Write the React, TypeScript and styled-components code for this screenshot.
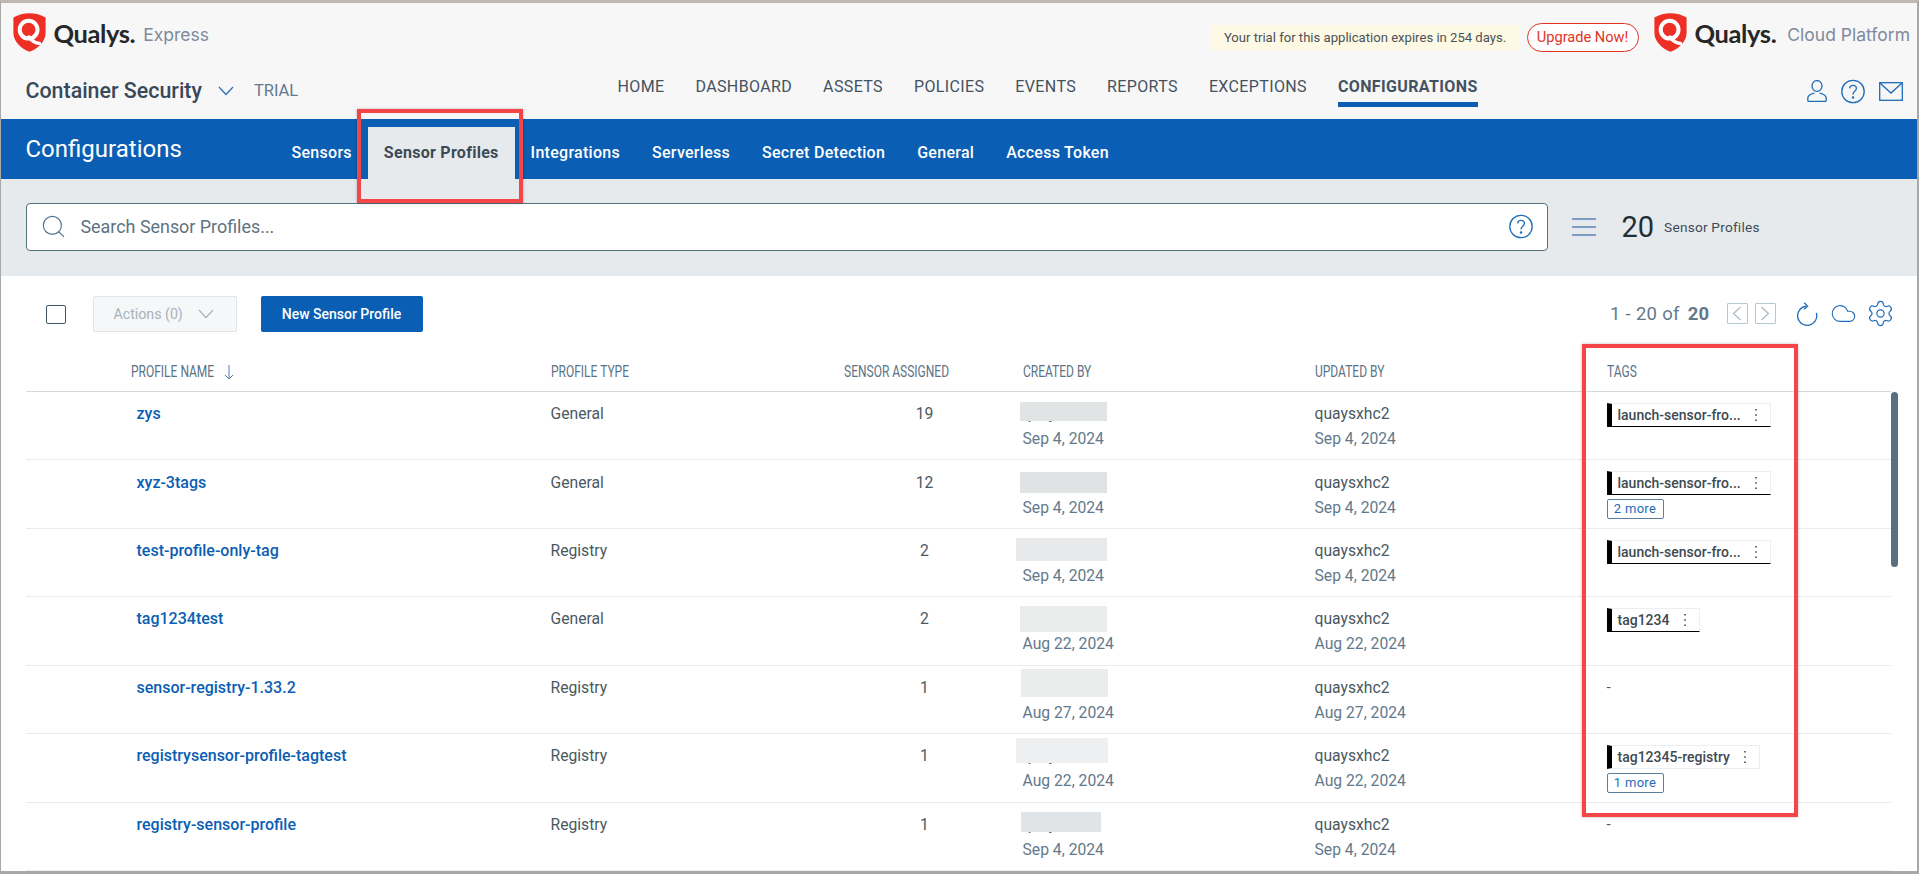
import styled, { createGlobalStyle } from "styled-components";
import { Cloud, Search, Settings } from "lucide-react";

const GlobalStyle = createGlobalStyle`
  html, body {
    margin: 0;
    padding: 0;
    background: #fff;
    overflow: hidden;
  }
  * {
    box-sizing: border-box;
  }
  body {
    font-family: Roboto, "Liberation Sans", sans-serif;
    color: #44525f;
  }
  ul {
    list-style: none;
    margin: 0;
    padding: 0;
  }
`;

const Frame = styled.div`
  position: relative;
  width: 1919px;
  height: 874px;
  overflow: hidden;
  background: #fff;
  border-style: solid;
  border-color: #a8a8a8;
  border-width: 0 2px 3px 1.5px;
  border-top: 3.5px solid #c2b6b0;
`;

/* top header */
const TopBar = styled.header`
  background: #f7f7f7;
  height: 115.5px;
`;

const BrandRow = styled.div`
  height: 59.5px;
  display: flex;
  align-items: center;
  padding: 0 7px 0 11.5px;
`;

const Brand = styled.div`
  display: flex;
  align-items: center;
`;

const LogoMark = styled.svg`
  width: 33px;
  height: 39px;
  flex: none;
`;

const BrandName = styled.span`
  font-family: Lato, "Liberation Sans", sans-serif;
  font-size: 25.5px;
  font-weight: 700;
  letter-spacing: -0.4px;
  color: #252728;
  margin-left: 8px;
`;

const BrandSuffix = styled.span<{ $gap: number }>`
  font-family: Inter, "Liberation Sans", sans-serif;
  font-size: 17.5px;
  color: #7e8a9d;
  margin-left: ${(p) => p.$gap}px;
  margin-top: 3px;
`;

const TrialArea = styled.div`
  margin-left: auto;
  display: flex;
  align-items: center;
  margin-top: 9px;
`;

const TrialNotice = styled.div`
  width: 309px;
  height: 25px;
  background: #fdf9e4;
  font-size: 13.1px;
  line-height: 25px;
  text-align: center;
  color: #4b5258;
`;

const UpgradeButton = styled.button`
  width: 112px;
  height: 29px;
  margin-left: 7px;
  border: 1px solid #e0341f;
  border-radius: 15px;
  background: #fff;
  color: #e0341f;
  font: 14.6px Roboto, sans-serif;
  padding: 0;
`;

const RightBrand = styled(Brand)`
  margin-left: 15px;
`;

const NavRow = styled.div`
  height: 56px;
  display: flex;
  align-items: flex-start;
`;

const AppSwitch = styled.div`
  width: 616.5px;
  height: 56px;
  padding-left: 24.5px;
  display: flex;
  align-items: center;
`;

const AppName = styled.span`
  font-size: 21.4px;
  font-weight: 500;
  color: #39495a;
`;

const Chevron = styled.svg`
  width: 16px;
  height: 10px;
  margin-left: 16px;
`;

const TrialTag = styled.span`
  font-size: 16.5px;
  color: #647b8d;
  margin-left: 20px;
`;

const MainNav = styled.ul`
  display: flex;
  gap: 31px;
  margin-top: 13px;
`;

const NavItem = styled.li<{ $active?: boolean }>`
  font-size: 16px;
  line-height: 22px;
  letter-spacing: 0.37px;
  height: 31px;
  padding-bottom: 4px;
  color: #44525f;
  font-weight: ${(p) => (p.$active ? 700 : 400)};
  border-bottom: 5px solid ${(p) => (p.$active ? "#0a5eb3" : "transparent")};
`;

const UserIcons = styled.div`
  margin-left: auto;
  margin-top: 16px;
  padding-right: 14.5px;
  display: flex;
  align-items: center;
  gap: 14px;
`;

const LineIcon = styled.svg`
  fill: none;
  stroke: #1f6cb8;
  stroke-width: 1.3;
  flex: none;
`;

/* blue section bar */
const SectionBar = styled.div`
  height: 60px;
  background: #0a5eb3;
  display: flex;
  padding-left: 24.5px;
`;

const SectionTitle = styled.h1`
  width: 250px;
  margin: 0;
  align-self: center;
  font-size: 24px;
  font-weight: 400;
  color: #fff;
`;

const SubTabs = styled.ul`
  display: flex;
  align-self: flex-end;
  height: 52px;
`;

const SubTab = styled.li<{ $active?: boolean }>`
  padding: 0 16px;
  display: flex;
  align-items: center;
  font-size: 16px;
  font-weight: ${(p) => (p.$active ? 700 : 500)};
  letter-spacing: 0.28px;
  color: ${(p) => (p.$active ? "#3d4a55" : "#fff")};
  background: ${(p) => (p.$active ? "#e6eaed" : "transparent")};
`;

/* search strip */
const SearchStrip = styled.div`
  height: 97px;
  background: #e6eaed;
  padding: 24px 0 0 24.5px;
  display: flex;
  align-items: flex-start;
`;

const SearchBox = styled.div`
  width: 1522px;
  height: 48px;
  background: #fff;
  border: 1px solid #55707f;
  border-radius: 4px;
  display: flex;
  align-items: center;
  padding: 0 14px 0 13px;
`;

const SearchText = styled.span`
  font-size: 17.9px;
  color: #5d7282;
  margin-left: 14px;
  flex: 1;
`;

const CountArea = styled.div`
  height: 48px;
  display: flex;
  align-items: center;
  margin-left: 24px;
`;

const CountNumber = styled.span`
  font-size: 29px;
  color: #222d36;
  margin-left: 26px;
`;

const CountLabel = styled.span`
  font-size: 13.7px;
  letter-spacing: 0.2px;
  color: #3d4b56;
  margin-left: 10px;
`;

/* list toolbar */
const Toolbar = styled.div`
  height: 56px;
  padding: 20px 22.5px 0 44.5px;
  display: flex;
  align-items: flex-start;
`;

const CheckBox = styled.span`
  width: 20px;
  height: 19px;
  margin-top: 9px;
  border: 1px solid #3f5868;
  border-radius: 2px;
  background: #fff;
`;

const ActionsButton = styled.button`
  width: 144px;
  height: 36px;
  margin-left: 27px;
  display: flex;
  align-items: center;
  justify-content: space-between;
  padding: 0 22px 0 20px;
  background: #f5f7f8;
  border: 1px solid #e0e4e7;
  border-radius: 2px;
  color: #a8b3bb;
  font: 14.2px Roboto, sans-serif;
`;

const PrimaryButton = styled.button`
  width: 162px;
  height: 36px;
  margin-left: 24px;
  background: #0a5eb3;
  border: 0;
  border-radius: 2px;
  color: #fff;
  font: 500 14px Roboto, sans-serif;
  padding: 0;
`;

const PagerArea = styled.div`
  margin-left: auto;
  height: 36px;
  display: flex;
  align-items: center;
`;

const PagerText = styled.span`
  font-size: 18.5px;
  letter-spacing: 0.3px;
  color: #63798b;
  margin-right: 17px;

  b {
    font-weight: 700;
    margin-left: 3px;
  }
`;

const PagerButton = styled.span`
  width: 21px;
  height: 21px;
  margin-right: 7px;
  border: 1px solid #b8c6d0;
  border-radius: 1px;
  display: flex;
  align-items: center;
  justify-content: center;
`;

const PagerIcons = styled.div`
  display: flex;
  align-items: center;
  gap: 9px;
  margin-left: 14px;
`;

/* table */
const Table = styled.div`
  position: relative;
  margin-left: 24.5px;
  width: 1872px;
`;

const COLUMNS = "525px 249px 150px 365px 292px 284px";

const HeadRow = styled.div`
  width: 1865px;
  height: 60.5px;
  display: grid;
  grid-template-columns: ${COLUMNS};
  border-bottom: 1.5px solid #d5dadd;
`;

const HeadCell = styled.div<{ $pad?: number; $right?: boolean }>`
  padding-left: ${(p) => p.$pad ?? 0}px;
  padding-top: 29px;
  line-height: 22px;
  white-space: nowrap;
  text-align: ${(p) => (p.$right ? "right" : "left")};
`;

/* the reference header face is condensed, none is installed, so it is squeezed */
const HeadLabel = styled.span<{ $right?: boolean }>`
  display: inline-block;
  font-size: 16px;
  color: #5b7285;
  transform: scaleX(0.75);
  transform-origin: ${(p) => (p.$right ? "right" : "left")} center;
`;

const SortArrow = styled.svg`
  width: 10px;
  height: 15px;
  margin-left: -17px;
  vertical-align: -3px;
`;

const Row = styled.div`
  width: 1865px;
  height: 68.43px;
  display: grid;
  grid-template-columns: ${COLUMNS};
  border-bottom: 1.5px solid #e8ecee;
`;

const Cell = styled.div`
  position: relative;
  padding-top: 9.2px;
  font-size: 15.7px;
  line-height: 25px;
  color: #4a5861;
`;

const NameCell = styled(Cell)`
  padding-left: 111px;
  font-size: 16px;
  font-weight: 500;
  color: #0a5eb3;
`;

const CountCell = styled(Cell)`
  padding-left: 100px;
  text-align: center;
`;

const PersonCell = styled(Cell)`
  padding-left: 73px;
`;

const DateLine = styled.div`
  color: #63798b;
`;

const Redaction = styled.div<{ $left: number; $top: number; $w: number; $h: number; $tone: string }>`
  position: absolute;
  left: ${(p) => p.$left}px;
  top: ${(p) => p.$top}px;
  width: ${(p) => p.$w}px;
  height: ${(p) => p.$h}px;
  background: ${(p) => p.$tone};
`;

const TagCell = styled.div`
  padding-top: 11px;
`;

const TagChip = styled.div<{ $w: number; $plain?: boolean }>`
  width: ${(p) => p.$w}px;
  height: 24px;
  display: flex;
  align-items: center;
  justify-content: space-between;
  padding: 0 12px 0 6px;
  border: 1px solid #eceff1;
  border-left: 5px solid #000;
  border-bottom: ${(p) => (p.$plain ? "1px solid #eceff1" : "1.5px solid #000")};
  font-size: 14px;
  font-weight: 500;
  color: #3e4a52;
`;

const MoreLink = styled.div`
  width: 57px;
  height: 20px;
  margin-top: 3.5px;
  border: 1px solid #5a7f9b;
  border-radius: 2px;
  font-size: 13px;
  line-height: 18px;
  text-align: center;
  letter-spacing: 0.3px;
  color: #1f6cb8;
`;

const Dash = styled.div`
  font-size: 15px;
  line-height: 20px;
  color: #4a5861;
`;

const TableScroll = styled.div`
  position: absolute;
  right: 0;
  top: 60px;
  width: 7px;
  height: 175px;
  border-radius: 4px;
  background: #5a7080;
`;

const Callout = styled.div<{ $left: number; $top: number; $w: number; $h: number }>`
  position: absolute;
  left: ${(p) => p.$left}px;
  top: ${(p) => p.$top}px;
  width: ${(p) => p.$w}px;
  height: ${(p) => p.$h}px;
  border: 4px solid #f44649;
  box-shadow: 0 0 3px rgba(0, 0, 0, 0.25);
  pointer-events: none;
`;

function QualysLogo() {
  return (
    <LogoMark viewBox="0 0 33 39">
      <path
        d="M16.5 0.2C22 0.2 28 1.8 32.6 4.4V20C32.6 28.5 25 35.5 16.5 38.8C8 35.5 0.4 28.5 0.4 20V4.4C5 1.8 11 0.2 16.5 0.2Z"
        fill="#ee2f26"
      />
      <circle cx="15.6" cy="16.7" r="8.9" fill="none" stroke="#fff" strokeWidth="4" />
      <path d="M16 24C18.5 27.6 22 30 26.5 30.5" fill="none" stroke="#fff" strokeWidth="3.4" strokeLinecap="round" />
    </LogoMark>
  );
}

function DownChevron() {
  return (
    <Chevron viewBox="0 0 16 10">
      <path d="M1 1l7 7.5L15 1" fill="none" stroke="#2a6fb5" strokeWidth="1.2" />
    </Chevron>
  );
}

function HelpIcon() {
  return (
    <LineIcon width="24" height="25" viewBox="0 0 24 25">
      <circle cx="12" cy="12.5" r="11.2" />
      <path d="M8.6 9.4C8.8 7.4 10.2 6.4 12 6.4C14 6.4 15.4 7.7 15.4 9.5C15.4 12.2 12 12.3 12 15.4" />
      <circle cx="12" cy="18.4" r="0.6" fill="#1f6cb8" />
    </LineIcon>
  );
}

function UserIcon() {
  return (
    <LineIcon width="20" height="22" viewBox="0 0 20 22">
      <ellipse cx="10" cy="6" rx="5" ry="5.4" />
      <path d="M0.8 21.3V18.4C0.8 15.4 4.6 13.8 7.4 13.2M19.2 21.3V18.4C19.2 15.4 15.4 13.8 12.6 13.2M0.8 21.3H19.2" />
    </LineIcon>
  );
}

function MailIcon() {
  return (
    <LineIcon width="24" height="19" viewBox="0 0 24 19">
      <rect x="0.7" y="0.7" width="22.6" height="17.6" />
      <path d="M0.7 0.7L12 11L23.3 0.7" />
    </LineIcon>
  );
}

function Hamburger() {
  return (
    <svg width="24" height="18" viewBox="0 0 24 18">
      <path d="M0 1h24M0 9h24M0 17h24" stroke="#5b85b5" strokeWidth="1.3" />
    </svg>
  );
}

const ReloadGlyph = styled(LineIcon)`
  margin-right: 3px;
`;

function ReloadIcon() {
  return (
    <ReloadGlyph width="21" height="24" viewBox="0 0 21 24">
      <path d="M9 4.2A9.6 9.6 0 1 0 19.4 11" />
      <path d="M7.2 0.8L10.6 4.1L7 7.2" />
    </ReloadGlyph>
  );
}

const rows = [
  { name: "zys", type: "General", count: 19, date: "Sep 4, 2024", mask: [70, 9.5, 87, 19, "#e1e4e5"], tag: "launch-sensor-fro...", w: 164 },
  { name: "xyz-3tags", type: "General", count: 12, date: "Sep 4, 2024", mask: [70, 11.5, 87, 21, "#e0e3e4"], tag: "launch-sensor-fro...", w: 164, more: "2 more" },
  { name: "test-profile-only-tag", type: "Registry", count: 2, date: "Sep 4, 2024", mask: [66, 9.5, 91, 23, "#e7e9ea"], tag: "launch-sensor-fro...", w: 164 },
  { name: "tag1234test", type: "General", count: 2, date: "Aug 22, 2024", mask: [70, 8.5, 87, 26, "#ebeded"], tag: "tag1234", w: 93 },
  { name: "sensor-registry-1.33.2", type: "Registry", count: 1, date: "Aug 27, 2024", mask: [71, 3.5, 87, 28, "#ebeded"] },
  { name: "registrysensor-profile-tagtest", type: "Registry", count: 1, date: "Aug 22, 2024", mask: [66, 3.5, 92, 25, "#eeeff0"], tag: "tag12345-registry", w: 153, plain: true, more: "1 more" },
  { name: "registry-sensor-profile", type: "Registry", count: 1, date: "Sep 4, 2024", mask: [71, 9.5, 80, 20, "#e1e4e6"] },
];

export default function App() {
  return (
    <>
      <GlobalStyle />
      <Frame>
        <TopBar>
          <BrandRow>
            <Brand>
              <QualysLogo />
              <BrandName>Qualys.</BrandName>
              <BrandSuffix $gap={8}>Express</BrandSuffix>
            </Brand>
            <TrialArea>
              <TrialNotice>Your trial for this application expires in 254 days.</TrialNotice>
              <UpgradeButton>Upgrade Now!</UpgradeButton>
            </TrialArea>
            <RightBrand>
              <QualysLogo />
              <BrandName>Qualys.</BrandName>
              <BrandSuffix $gap={11}>Cloud Platform</BrandSuffix>
            </RightBrand>
          </BrandRow>
          <NavRow>
            <AppSwitch>
              <AppName>Container Security</AppName>
              <DownChevron />
              <TrialTag>TRIAL</TrialTag>
            </AppSwitch>
            <MainNav>
              <NavItem>HOME</NavItem>
              <NavItem>DASHBOARD</NavItem>
              <NavItem>ASSETS</NavItem>
              <NavItem>POLICIES</NavItem>
              <NavItem>EVENTS</NavItem>
              <NavItem>REPORTS</NavItem>
              <NavItem>EXCEPTIONS</NavItem>
              <NavItem $active>CONFIGURATIONS</NavItem>
            </MainNav>
            <UserIcons>
              <UserIcon />
              <HelpIcon />
              <MailIcon />
            </UserIcons>
          </NavRow>
        </TopBar>

        <SectionBar>
          <SectionTitle>Configurations</SectionTitle>
          <SubTabs>
            <SubTab>Sensors</SubTab>
            <SubTab $active>Sensor Profiles</SubTab>
            <SubTab>Integrations</SubTab>
            <SubTab>Serverless</SubTab>
            <SubTab>Secret Detection</SubTab>
            <SubTab>General</SubTab>
            <SubTab>Access Token</SubTab>
          </SubTabs>
        </SectionBar>

        <SearchStrip>
          <SearchBox>
            <Search size={27} strokeWidth={1} color="#4f7393" />
            <SearchText>Search Sensor Profiles...</SearchText>
            <HelpIcon />
          </SearchBox>
          <CountArea>
            <Hamburger />
            <CountNumber>20</CountNumber>
            <CountLabel>Sensor Profiles</CountLabel>
          </CountArea>
        </SearchStrip>

        <Toolbar>
          <CheckBox />
          <ActionsButton>
            Actions (0)
            <svg width="16" height="10" viewBox="0 0 16 10">
              <path d="M1 1l7 7.5L15 1" fill="none" stroke="#a8b3bb" strokeWidth="1.2" />
            </svg>
          </ActionsButton>
          <PrimaryButton>New Sensor Profile</PrimaryButton>
          <PagerArea>
            <PagerText>
              1 - 20 of <b>20</b>
            </PagerText>
            <PagerButton>
              <svg width="10" height="15" viewBox="0 0 10 15">
                <path d="M8.5 1L1.5 7.5L8.5 14" fill="none" stroke="#a9b8c3" strokeWidth="1.2" />
              </svg>
            </PagerButton>
            <PagerButton>
              <svg width="10" height="15" viewBox="0 0 10 15">
                <path d="M1.5 1L8.5 7.5L1.5 14" fill="none" stroke="#a9b8c3" strokeWidth="1.2" />
              </svg>
            </PagerButton>
            <PagerIcons>
              <ReloadIcon />
              <Cloud size={27} strokeWidth={1} color="#1f6cb8" />
              <Settings size={29} strokeWidth={1} color="#1f6cb8" />
            </PagerIcons>
          </PagerArea>
        </Toolbar>

        <Table>
          <HeadRow>
            <HeadCell $pad={105}>
              <HeadLabel>PROFILE NAME</HeadLabel>
              <SortArrow viewBox="0 0 10 15">
                <path d="M5 0v14M1 10l4 4 4-4" fill="none" stroke="#4f7fb5" strokeWidth="1" />
              </SortArrow>
            </HeadCell>
            <HeadCell>
              <HeadLabel>PROFILE TYPE</HeadLabel>
            </HeadCell>
            <HeadCell $right>
              <HeadLabel $right>SENSOR ASSIGNED</HeadLabel>
            </HeadCell>
            <HeadCell $pad={73}>
              <HeadLabel>CREATED BY</HeadLabel>
            </HeadCell>
            <HeadCell>
              <HeadLabel>UPDATED BY</HeadLabel>
            </HeadCell>
            <HeadCell>
              <HeadLabel>TAGS</HeadLabel>
            </HeadCell>
          </HeadRow>
          {rows.map((row) => (
            <Row key={row.name}>
              <NameCell>{row.name}</NameCell>
              <Cell>{row.type}</Cell>
              <CountCell>{row.count}</CountCell>
              <PersonCell>
                <div>quaysxhc2</div>
                <DateLine>{row.date}</DateLine>
                <Redaction
                  $left={row.mask[0] as number}
                  $top={row.mask[1] as number}
                  $w={row.mask[2] as number}
                  $h={row.mask[3] as number}
                  $tone={row.mask[4] as string}
                />
              </PersonCell>
              <Cell>
                <div>quaysxhc2</div>
                <DateLine>{row.date}</DateLine>
              </Cell>
              <TagCell>
                {row.tag ? (
                  <TagChip $w={row.w} $plain={row.plain}>
                    {row.tag}
                    <svg width="4" height="14" viewBox="0 0 4 14">
                      <path d="M2 1v1.6M2 6.2v1.6M2 11.4V13" stroke="#3e4a52" strokeWidth="1.6" />
                    </svg>
                  </TagChip>
                ) : (
                  <Dash>-</Dash>
                )}
                {row.more && <MoreLink>{row.more}</MoreLink>}
              </TagCell>
            </Row>
          ))}
          <TableScroll />
        </Table>

        <Callout $left={355.5} $top={105.5} $w={166} $h={94} />
        <Callout $left={1580.5} $top={340.5} $w={216} $h={473} />
      </Frame>
    </>
  );
}
